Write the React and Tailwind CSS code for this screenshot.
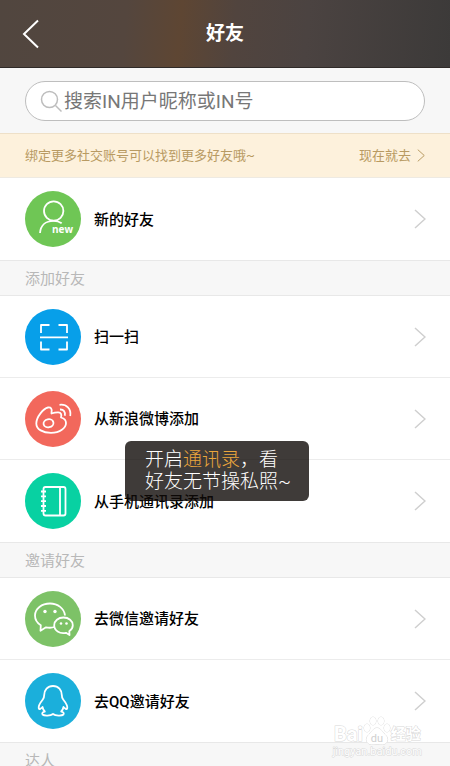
import React from "react";

function Chevron({ className = "h-5 w-3 text-[#cfcfcf]" }) {
  return (
    <svg viewBox="0 0 12 20" fill="none" stroke="currentColor" strokeWidth="1.5" className={className}>
      <path d="M1 1l10 9-10 9" />
    </svg>
  );
}

function NewFriendIcon() {
  return (
    <>
      <circle cx="28.700" cy="20" r="9.700" />
      <path d="M15 42c.5-7.500 5.500-12.200 13.700-12.200 3 0 5.500.7 8 2.500" />
      <text x="27" y="42" fontSize="10" fontWeight="700" fill="#fff" stroke="none" className="font-['Open_Sans',sans-serif]">
        new
      </text>
    </>
  );
}

function ScanIcon() {
  return (
    <path d="M24.500 16H16v8M33.500 16H42v8M16 32.500v8h8.500M42 32.500v8h-8.500M15 28.300h28" />
  );
}

function WeiboIcon() {
  return (
    <>
      <path d="M26.500 21.500c.8-3.500-.5-5.500-3.500-5-4.500.8-11.700 9.500-11.700 16 0 6 6.700 9.300 14.700 9.300 9 0 15-4.800 15-9.800 0-3-2.300-4.800-5-5.500.8-3 .2-5-2.800-5.200-2.500-.1-4.700.5-6.700 1.200z" />
      <ellipse cx="23.500" cy="32.300" rx="5" ry="4" transform="rotate(-12 23.500 32.300)" />
      <path d="M35 18.500c3.500-.3 5.700 2.500 4.800 6.300M34.500 13.800c7-1 12 4.200 10.700 11.200" />
    </>
  );
}

function NotebookIcon() {
  return (
    <>
      <rect x="18.500" y="14" width="22" height="28.500" rx="2" />
      <path d="M35 14v28.500M16 18.500h5M16 23.300h5M16 28.200h5M16 33h5M16 37.800h5" />
    </>
  );
}

function WechatIcon() {
  return (
    <>
      <path d="M29.500 36c-2.500.8-5.500 1-8.500.3L15.500 39.700l.3-5.500c-3.800-2.300-5.800-5.800-5.800-9.700C10 17.800 16.700 12.500 25 12.500c7.800 0 14.300 5 15 12" />
      <path d="M38.500 26.500c5.200 0 9.300 3.400 9.300 7.700 0 2.500-1.500 4.600-3.500 6l.2 3.800-3.500-2.200c-6.500 1.500-11.800-2.500-11.800-7.600 0-4.300 4.100-7.700 9.300-7.700z" />
      <g fill="#fff" stroke="none">
        <circle cx="20" cy="20.500" r="1.700" />
        <circle cx="30" cy="20.500" r="1.700" />
        <circle cx="36" cy="32.500" r="1.300" />
        <circle cx="41.500" cy="32.500" r="1.300" />
      </g>
    </>
  );
}

function QQIcon() {
  return (
    <path d="M28 13c-5.500 0-8.800 4-8.800 9 0 2-.4 3.200-1.400 4.500-2.800 3.500-4.700 6.500-4 9 .4 1.300 2.200.3 3.700-1.500.3 1.800 1 3.200 2.300 4.500-2.300.5-3 2-2.300 3 1.500 1.500 8 1.500 10.500-.5 2.500 2 9 2 10.500.5.7-1 0-2.500-2.300-3 1.300-1.300 2-2.700 2.300-4.500 1.500 1.800 3.300 2.800 3.700 1.500.7-2.500-1.200-5.500-4-9-1-1.300-1.400-2.500-1.400-4.500 0-5-3.300-9-8.800-9z" />
  );
}

const newItems = [{ label: "新的好友", icon: NewFriendIcon, color: "bg-[#6fc655]" }];

const addItems = [
  { label: "扫一扫", icon: ScanIcon, color: "bg-[#079fe9]" },
  { label: "从新浪微博添加", icon: WeiboIcon, color: "bg-[#f2685c]" },
  { label: "从手机通讯录添加", icon: NotebookIcon, color: "bg-[#08d1a2]" },
];

const inviteItems = [
  { label: "去微信邀请好友", icon: WechatIcon, color: "bg-[#7dc267]" },
  { label: "去QQ邀请好友", icon: QQIcon, color: "bg-[#1bafdb]" },
];

function Row({ label, icon: Icon, color }) {
  return (
    <li className="h-[82px] border-b border-[#ececec] last:border-b-0">
      <a href="#" className="flex h-full items-center pl-[25px] pr-6">
        <span className={`h-14 w-14 shrink-0 rounded-full ${color}`}>
          <svg
            viewBox="0 0 56 56"
            fill="none"
            stroke="#fff"
            strokeWidth="1.8"
            strokeLinejoin="round"
            className="h-full w-full"
          >
            <Icon />
          </svg>
        </span>
        <span className="ml-[13px] flex-1 pt-0.5 text-[15px] font-medium text-black">{label}</span>
        <Chevron />
      </a>
    </li>
  );
}

function RowList({ items }) {
  return (
    <ul className="bg-white">
      {items.map((item) => (
        <Row key={item.label} {...item} />
      ))}
    </ul>
  );
}

function SectionTitle({ children }) {
  return (
    <h2 className="flex h-9 items-center border-y border-[#e8e8e8] bg-[#f7f7f7] px-[25px] pt-0.5 text-[15px] text-[#b8b8b8]">
      {children}
    </h2>
  );
}

function Toast() {
  return (
    <div
      role="status"
      className="absolute left-[125px] top-[441px] rounded-md bg-[#0f0a08]/80 py-2 pr-[18px] pl-5 text-[19px] leading-[22px] font-light text-white"
    >
      <p>
        开启<span className="text-[#eba63c]">通讯录</span>，看
      </p>
      <p>好友无节操私照~</p>
    </div>
  );
}

function Watermark() {
  return (
    <div className="pointer-events-none absolute right-7 bottom-2 text-white [-webkit-text-stroke:1px_#d8d8d8] [paint-order:stroke_fill]">
      <div className="flex items-end justify-center">
        <span className="text-xl leading-6 font-bold">Bai</span>
        <svg viewBox="0 0 28 30" fill="#fff" stroke="#d8d8d8" className="h-[30px] w-7">
          <ellipse cx="4" cy="12" rx="3" ry="4" />
          <ellipse cx="10" cy="5" rx="3" ry="4" />
          <ellipse cx="18" cy="5" rx="3" ry="4" />
          <ellipse cx="24" cy="12" rx="3" ry="4" />
          <path d="M14 12c-4 0-5 4-8 6.500-5 4.500-2 10 2.500 10 2.500 0 3.500-.5 5.500-.5s3 .5 5.500.5c4.500 0 7.500-5.500 2.500-10C19 16 18 12 14 12z" />
          <text
            x="14"
            y="26"
            textAnchor="middle"
            fontSize="11"
            fill="#d0d0d0"
            stroke="none"
            className="[-webkit-text-stroke:0]"
          >
            du
          </text>
        </svg>
        <span className="text-[15px] leading-6 font-bold">经验</span>
      </div>
      <p className="text-[11px] leading-3">jingyan.baidu.com</p>
    </div>
  );
}

export default function App() {
  return (
    <div className="relative h-screen overflow-hidden bg-[#f7f7f7] font-[Roboto,'Noto_Sans_CJK_SC',sans-serif]">
      <header className="grid h-17 grid-cols-[1fr_auto_1fr] items-center border-b border-[#2f2a28] bg-[linear-gradient(95deg,#51463f_0%,#54463e_28%,#5e4633_40%,#51443e_52%,#4b4341_68%,#3c3a39_100%)]">
        <button type="button" aria-label="返回" className="ml-[22px] w-8 text-white">
          <svg viewBox="0 0 18 30" fill="none" stroke="currentColor" strokeWidth="2" className="h-[30px] w-[18px]">
            <path d="M16 1.500L2 15l14 13.500" />
          </svg>
        </button>
        <h1 className="pt-0.5 text-[19px] font-bold text-white">好友</h1>
      </header>

      <div className="px-[25px] pt-[13px] pb-3">
        <label className="flex h-10 items-center gap-0.5 rounded-full border border-[#bebebe] bg-white px-3.5">
          <svg viewBox="0 0 22 22" fill="none" stroke="#bdbdbd" strokeWidth="1.5" className="h-[22px] w-[22px] shrink-0">
            <circle cx="9.500" cy="9.500" r="8" />
            <path d="M15.500 15.500l6 6" />
          </svg>
          <input
            type="text"
            aria-label="搜索"
            placeholder="搜索IN用户昵称或IN号"
            className="min-w-0 flex-1 pt-0.5 text-[19px] text-[#777] outline-none placeholder:text-[#777]"
          />
        </label>
      </div>

      <a
        href="#"
        className="flex h-[45px] items-center justify-between border-y border-t-[#eee0c8] border-b-[#eeeae2] bg-[#fdf1dc] px-[25px] text-[13px] text-[#b89a62]"
      >
        <span>绑定更多社交账号可以找到更多好友哦~</span>
        <span className="flex items-center gap-1.5">
          现在就去
          <Chevron className="h-[13px] w-2" />
        </span>
      </a>

      <RowList items={newItems} />
      <SectionTitle>添加好友</SectionTitle>
      <RowList items={addItems} />
      <SectionTitle>邀请好友</SectionTitle>
      <RowList items={inviteItems} />
      <SectionTitle>达人</SectionTitle>

      <Toast />
      <Watermark />
    </div>
  );
}
